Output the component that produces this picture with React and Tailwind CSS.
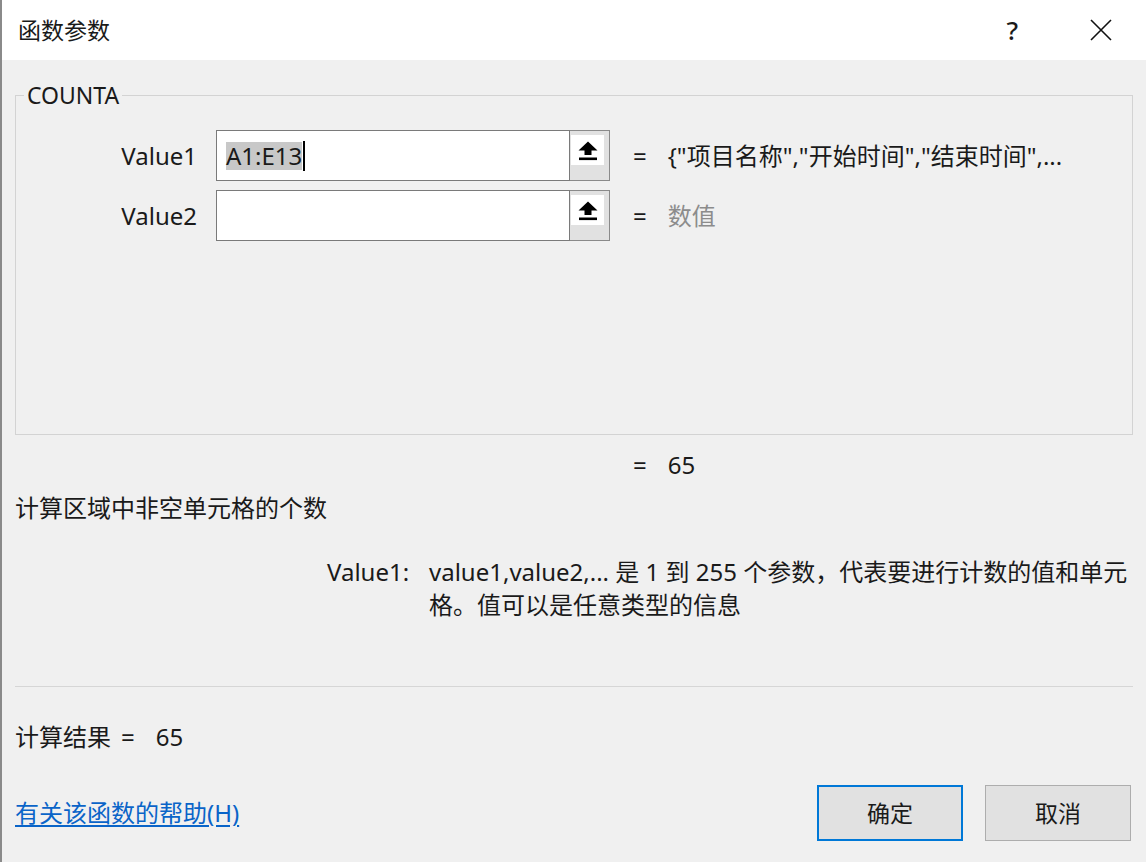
import React from "react";

const font = { fontFamily: '"Noto Sans", "Noto Sans CJK SC", sans-serif' };

const UploadIcon = () => (
  <span className="flex h-[30px] w-[33px] items-center justify-center bg-white">
    <svg width="22" height="22" viewBox="0 0 22 22">
      <path d="M11 2.5 L20.5 11.5 L14.5 11.5 L14.5 16 L7.5 16 L7.5 11.5 L1.5 11.5 Z" fill="#000" />
      <rect x="2" y="18.5" width="18" height="2.6" fill="#000" />
    </svg>
  </span>
);

const ArgRow = ({ label, value, selected, result, muted }) => (
  <div className="flex items-center h-[51px]">
    <div className="w-[182px] pr-[1px] text-right text-[#1a1a1a]">{label}</div>
    <div className="ml-[18px] flex h-[51px] w-[394px]">
      <div className="flex flex-1 items-center border border-[#7a7a7a] bg-white pl-[9px]">
        {selected && (
          <>
            <span className="bg-[#c8c8c8] leading-[28px] text-[#1a1a1a]">{value}</span>
            <span className="ml-[1px] h-[30px] w-[2px] bg-black"></span>
          </>
        )}
      </div>
      <button className="flex w-[40px] items-start justify-start border border-l-0 border-[#8a8a8a] bg-[#e1e1e1] pl-[1px] pt-[4px]">
        <UploadIcon />
      </button>
    </div>
    <span className="ml-[23px] text-[#1a1a1a]">=</span>
    <span className={"ml-[21px] " + (muted ? "text-[#8c8c8c]" : "text-[#1a1a1a]")}>{result}</span>
  </div>
);

const App = () => {
  return (
    <div
      className="flex h-[862px] w-[1146px] flex-col overflow-hidden border-l-2 border-[#8a8a8a] bg-[#f0f0f0] text-[24px] leading-none text-[#1a1a1a]"
      style={font}
    >
      {/* title bar */}
      <div className="flex h-[60px] shrink-0 items-center bg-white pl-[16px]">
        <span className="text-[23px]">函数参数</span>
        <span className="ml-auto mr-[72px] text-[26px] font-medium">?</span>
        <svg className="mr-[34px]" width="22" height="22" viewBox="0 0 22 22">
          <path d="M1 1 L21 21 M21 1 L1 21" stroke="#111" strokeWidth="1.6" />
        </svg>
      </div>

      <div className="flex flex-1 flex-col px-[13px]">
        <fieldset className="mt-[21px] h-[354px] border border-[#d3d3d3] px-0">
          <legend className="ml-[8px] px-[3px] text-[23px] leading-[28px]">COUNTA</legend>
          <div className="mt-[21px] flex flex-col gap-[9px]">
            <ArgRow
              label="Value1"
              value="A1:E13"
              selected
              result={'{"项目名称","开始时间","结束时间",...'}
            />
            <ArgRow label="Value2" result="数值" muted />
          </div>
        </fieldset>

        <div className="mt-[19px] flex h-[22px] items-center pl-[618px]">
          <span>=</span>
          <span className="ml-[21px]">65</span>
        </div>

        <div className="mt-[20px] h-[24px]">计算区域中非空单元格的个数</div>

        <div className="mt-[35px] flex pl-[312px]">
          <span className="w-[102px] shrink-0 leading-[33px]">Value1:</span>
          <div className="leading-[33px]">
            <div>value1,value2,... 是 1 到 255 个参数，代表要进行计数的值和单元</div>
            <div>格。值可以是任意类型的信息</div>
          </div>
        </div>

        <div className="mt-[65px] h-px w-full bg-[#d6d6d6]"></div>

        <div className="mt-[38px] flex h-[24px] items-center">
          <span>计算结果</span>
          <span className="ml-[10px]">=</span>
          <span className="ml-[21px]">65</span>
        </div>

        <div className="mt-[36px] flex items-center">
          <a href="#" className="text-[#0a64c8] underline underline-offset-[3px]">
            有关该函数的帮助(H)
          </a>
          <button className="ml-auto flex h-[56px] w-[146px] items-center justify-center border-2 border-[#0078d7] bg-[#e1e1e1] text-[23px]">
            确定
          </button>
          <button className="ml-[22px] mr-[2px] flex h-[56px] w-[146px] items-center justify-center border border-[#adadad] bg-[#e1e1e1] text-[23px]">
            取消
          </button>
        </div>
      </div>
    </div>
  );
};

export default App;
